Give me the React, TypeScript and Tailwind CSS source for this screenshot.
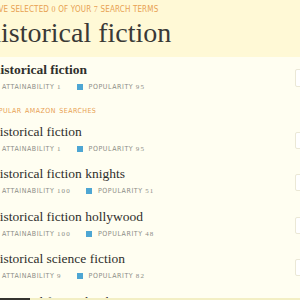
import React from "react";

type Term = {
  text: string;
  attainability: number;
  popularity: number;
};

const popular: Term[] = [
  { text: "historical fiction", attainability: 1, popularity: 95 },
  { text: "historical fiction knights", attainability: 100, popularity: 51 },
  { text: "historical fiction hollywood", attainability: 100, popularity: 48 },
  { text: "historical science fiction", attainability: 9, popularity: 82 },
  { text: "historical fiction books", attainability: 40, popularity: 70 },
];

const serif = "font-['Liberation_Serif',serif]";
const narrow = "font-['Liberation_Sans_Narrow','DejaVu_Sans_Condensed','Liberation_Sans',sans-serif]";

function Num({ n, wide }: { n: number; wide?: boolean }) {
  return <span className={`${serif} ${wide ? "tracking-[1.2px]" : "tracking-[0.3px]"}`}>{n}</span>;
}

function Meta({ term }: { term: Term }) {
  return (
    <div className={`flex items-center h-[8px] mt-[5px] ${narrow} text-[7px] leading-[8px] tracking-[0.55px] text-[#8c8c86]`}>
      <span className="w-[6px] h-[6px] bg-[#e9a55a] mr-[6px] shrink-0" />
      <span className="whitespace-nowrap">
        ATTAINABILITY <Num n={term.attainability} wide />
      </span>
      <span className="w-[6px] h-[6px] bg-[#4ea6d3] ml-[15px] mr-[6px] shrink-0" />
      <span className="whitespace-nowrap">
        POPULARITY <Num n={term.popularity} wide />
      </span>
    </div>
  );
}

function Row({ term, bold }: { term: Term; bold?: boolean }) {
  return (
    <div className="flex justify-between pr-[10px] h-[42.5px]">
      <div>
        <div className={`${serif} text-[13.5px] leading-[16px] text-[#2f2f2c] whitespace-nowrap ${bold ? "font-bold" : ""}`}>
          {term.text}
        </div>
        <div className="ml-[-3px]">
          <Meta term={term} />
        </div>
      </div>
      <div
        className={`w-[18px] bg-white border border-[#ebe8d6] rounded-[2px] shrink-0 ${
          bold ? "mt-[7px] h-[18px]" : "mt-[8px] h-[17px]"
        }`}
      />
    </div>
  );
}

export default function App() {
  return (
    <div className="w-[300px] h-[300px] overflow-hidden relative bg-[#fffef1]">
      <div className="w-[330px] ml-[-7px]">
        <div className="bg-[#fff9d6] h-[57px] pt-[5px]">
          <div className={`${narrow} text-[8px] leading-[10px] tracking-[0.15px] text-[#e8a152] ml-[-12px] whitespace-nowrap`}>
            YOU'VE SELECTED <Num n={0} /> OF YOUR <Num n={7} /> SEARCH TERMS
          </div>
          <div className={`${serif} text-[28px] leading-[34px] text-[#3a3936] ml-[-6px] mt-[1px]`}>
            historical fiction
          </div>
        </div>

        <div className="mt-[5px]">
          <Row term={{ text: "historical fiction", attainability: 1, popularity: 95 }} bold />
        </div>

        <div className="h-[19px] pt-[2px]">
          <div className={`${narrow} text-[7px] leading-[8px] tracking-[0.45px] [word-spacing:1px] text-[#e8a152] ml-[-4px] whitespace-nowrap`}>
            POPULAR AMAZON SEARCHES
          </div>
        </div>

        {popular.map((t) => (
          <Row key={t.text} term={t} />
        ))}
      </div>

      <div className="absolute left-0 right-0 bottom-0 h-[2px] flex">
        <div className="w-[30px] bg-[#35342f]" />
        <div className="flex-1 bg-[#f3efc4]" />
      </div>
    </div>
  );
}
